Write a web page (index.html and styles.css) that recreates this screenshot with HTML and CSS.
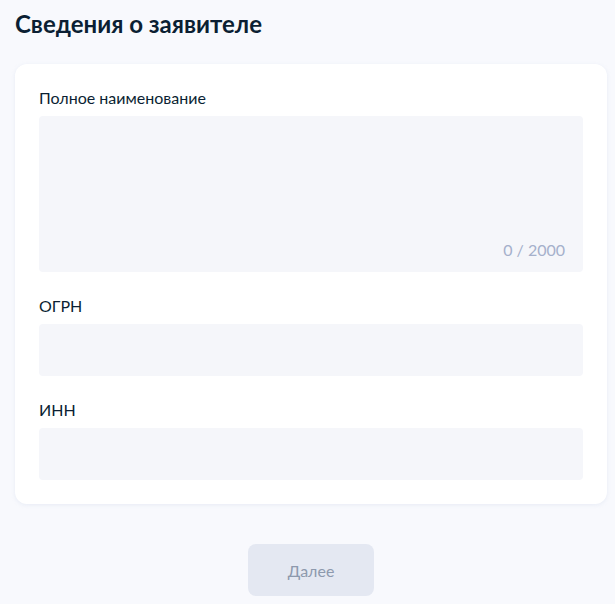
FILE: index.html
```
<!DOCTYPE html>
<html lang="ru">
<head>
<meta charset="utf-8">
<link rel="stylesheet" href="styles.css">
</head>
<body>
<div class="page">
  <h1 class="title">Сведения о заявителе</h1>
  <div class="card">
    <div class="field">
      <div class="label">Полное наименование</div>
      <div class="textarea"><span class="counter">0 / 2000</span></div>
    </div>
    <div class="field">
      <div class="label">ОГРН</div>
      <div class="input"></div>
    </div>
    <div class="field">
      <div class="label">ИНН</div>
      <div class="input"></div>
    </div>
  </div>
  <div class="actions">
    <button class="btn">Далее</button>
  </div>
</div>
</body>
</html>
```
FILE: styles.css
```
html, body {
  margin: 0;
  padding: 0;
  background: #f8f9fd;
  font-family: Lato, "Noto Sans", sans-serif;
}
.page {
  padding: 8px 8px 8px 15px;
}
.title {
  margin: 0 0 24px 0;
  font-size: 24px;
  line-height: 32px;
  font-weight: 700;
  color: #0b1f33;
}
.card {
  background: #fff;
  border-radius: 12px;
  padding: 24px;
  display: flex;
  flex-direction: column;
  gap: 24px;
  box-shadow: 0 1px 4px rgba(160, 175, 210, 0.18);
}
.field {
  display: flex;
  flex-direction: column;
  gap: 8px;
}
.label {
  font-size: 16px;
  line-height: 20px;
  color: #0b1f33;
}
.textarea {
  height: 156px;
  background: #f5f6fa;
  border-radius: 4px;
  display: flex;
  justify-content: flex-end;
  align-items: flex-end;
  padding: 0 18px 12px 0;
  box-sizing: border-box;
}
.counter {
  font-size: 16px;
  line-height: 20px;
  color: #a5b0cb;
}
.input {
  height: 52px;
  background: #f5f6fa;
  border-radius: 4px;
}
.actions {
  display: flex;
  justify-content: center;
  margin-top: 40px;
}
.btn {
  width: 126px;
  height: 52px;
  border: none;
  border-radius: 8px;
  background: #e4e8f2;
  color: #8d99ad;
  font-family: Lato, "Noto Sans", sans-serif;
  font-size: 16px;
}
```
